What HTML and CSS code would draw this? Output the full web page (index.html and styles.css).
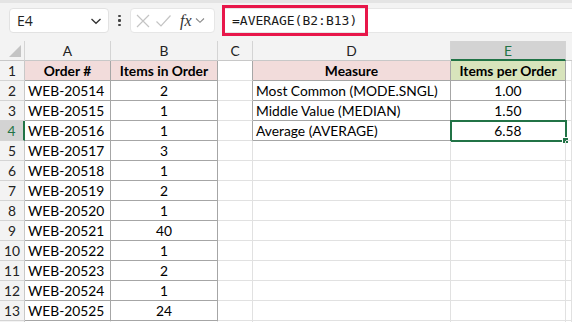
FILE: index.html
```html
<!DOCTYPE html>
<html>
<head>
<meta charset="utf-8">
<link rel="stylesheet" href="styles.css">
</head>
<body>
<div class="toolbar">
  <div class="namebox"><span class="nb-text">E4</span>
    <svg class="chev" width="12" height="8" viewBox="0 0 12 8"><path d="M1.5 2 L6 6.3 L10.5 2" fill="none" stroke="#333" stroke-width="1.3"/></svg>
  </div>
  <div class="dots"><i></i><i></i><i></i></div>
  <div class="fxbox">
    <svg width="16" height="16" viewBox="0 0 16 16"><path d="M2 2 L14 14 M14 2 L2 14" stroke="#c4c4c4" stroke-width="1.2"/></svg>
    <svg width="17" height="16" viewBox="0 0 17 16"><path d="M1.5 8.5 L6 13 L15.5 2.5" fill="none" stroke="#c4c4c4" stroke-width="1.2"/></svg>
    <span class="fx">fx</span>
    <svg class="chev2" width="10" height="7" viewBox="0 0 10 7"><path d="M1 1.5 L5 5.3 L9 1.5" fill="none" stroke="#888" stroke-width="1.1"/></svg>
  </div>
  <div class="formula">
    <span class="ftext">=AVERAGE(B2:B13)</span>
    <span class="highlight"></span>
  </div>
</div>
<div class="sheet">
  <div class="corner"><span class="tri"></span></div>
  <div class="ch">A</div><div class="ch">B</div><div class="ch">C</div><div class="ch">D</div><div class="ch sel">E</div><div class="ch last"></div>

  <div class="rh">1</div><div class="c hd dk">Order #</div><div class="c hd dk ctr">Items in Order</div><div class="c dkr"></div><div class="c hd dk ctr">Measure</div><div class="c hdg dk ctr">Items per Order</div><div class="c"></div>
  <div class="rh">2</div><div class="c dk">WEB-20514</div><div class="c dk ctr">2</div><div class="c dkr"></div><div class="c dk">Most Common (MODE.SNGL)</div><div class="c dk ctr">1.00</div><div class="c"></div>
  <div class="rh">3</div><div class="c dk">WEB-20515</div><div class="c dk ctr">1</div><div class="c dkr"></div><div class="c dk">Middle Value (MEDIAN)</div><div class="c dk ctr">1.50</div><div class="c"></div>
  <div class="rh selr">4</div><div class="c dk">WEB-20516</div><div class="c dk ctr">1</div><div class="c dkr"></div><div class="c dk">Average (AVERAGE)</div><div class="c dk ctr active">6.58<span class="handle"></span></div><div class="c"></div>
  <div class="rh">5</div><div class="c dk">WEB-20517</div><div class="c dk ctr">3</div><div class="c"></div><div class="c"></div><div class="c"></div><div class="c"></div>
  <div class="rh">6</div><div class="c dk">WEB-20518</div><div class="c dk ctr">1</div><div class="c"></div><div class="c"></div><div class="c"></div><div class="c"></div>
  <div class="rh">7</div><div class="c dk">WEB-20519</div><div class="c dk ctr">2</div><div class="c"></div><div class="c"></div><div class="c"></div><div class="c"></div>
  <div class="rh">8</div><div class="c dk">WEB-20520</div><div class="c dk ctr">1</div><div class="c"></div><div class="c"></div><div class="c"></div><div class="c"></div>
  <div class="rh">9</div><div class="c dk">WEB-20521</div><div class="c dk ctr">40</div><div class="c"></div><div class="c"></div><div class="c"></div><div class="c"></div>
  <div class="rh">10</div><div class="c dk">WEB-20522</div><div class="c dk ctr">1</div><div class="c"></div><div class="c"></div><div class="c"></div><div class="c"></div>
  <div class="rh">11</div><div class="c dk">WEB-20523</div><div class="c dk ctr">2</div><div class="c"></div><div class="c"></div><div class="c"></div><div class="c"></div>
  <div class="rh">12</div><div class="c dk">WEB-20524</div><div class="c dk ctr">1</div><div class="c"></div><div class="c"></div><div class="c"></div><div class="c"></div>
  <div class="rh">13</div><div class="c dk">WEB-20525</div><div class="c dk ctr">24</div><div class="c"></div><div class="c"></div><div class="c"></div><div class="c"></div>
  <div class="rh"></div><div class="c"></div><div class="c"></div><div class="c"></div><div class="c"></div><div class="c"></div><div class="c"></div>
</div>
</body>
</html>
```
FILE: styles.css
```css
* { box-sizing: border-box; }
html, body { margin: 0; padding: 0; }
body {
  width: 572px;
  height: 322px;
  overflow: hidden;
  background: #fff;
  font-family: Lato, "Open Sans", sans-serif;
  color: #000;
}
.toolbar {
  height: 41px;
  background: #f3f3f3;
  border-top: 3px solid #e4e4e4;
  display: flex;
  align-items: flex-start;
  padding-top: 5px;
  padding-left: 9px;
}
.namebox {
  width: 100px;
  height: 25px;
  background: #fff;
  border: 1px solid #e2e2e2;
  border-radius: 4px;
  display: flex;
  align-items: center;
  justify-content: space-between;
  padding: 0 6px 0 7px;
}
.nb-text { font-family: "Open Sans", sans-serif; font-size: 14px; color: #222; }
.dots {
  width: 21px;
  height: 25px;
  display: flex;
  flex-direction: column;
  align-items: center;
  justify-content: center;
  gap: 2px;
}
.dots i { display: block; width: 2.5px; height: 2.5px; background: #444; border-radius: 1px; }
.fxbox {
  width: 85px;
  height: 25px;
  background: #fff;
  border: 1px solid #e6e6e6;
  border-radius: 4px;
  display: flex;
  align-items: center;
  padding-left: 4px;
  gap: 4px;
}
.fx {
  font-family: "Liberation Serif", serif;
  font-style: italic;
  font-size: 16px;
  color: #333;
  margin-left: 4px;
}
.chev2 { margin-left: -1px; }
.formula {
  position: relative;
  flex: 1;
  height: 25px;
  margin-left: 7px;
  background: #fff;
  border: 1px solid #e6e6e6;
  border-right: none;
  display: flex;
  align-items: center;
  padding-left: 9px;
}
.ftext {
  font-family: "DejaVu Sans Mono", monospace;
  font-size: 13px;
  color: #1a1a1a;
}
.highlight {
  position: absolute;
  left: -1px;
  top: -4px;
  width: 146px;
  height: 31px;
  border: 3px solid #e8174a;
}
.sheet {
  display: grid;
  grid-template-columns: 25px 86px 107px 35px 198px 115px 6px;
  grid-template-rows: 20px repeat(13, 20px) 2px;
  font-size: 13.8px;
}
.corner {
  position: relative;
  background: #f3f3f3;
  border-right: 1px solid #d4d4d4;
  border-bottom: 1px solid #c8c8c8;
}
.tri {
  position: absolute;
  right: 3px;
  bottom: 3px;
  width: 0; height: 0;
  border-left: 12px solid transparent;
  border-bottom: 12px solid #c4c4c4;
}
.ch {
  background: #f3f3f3;
  border-right: 1px solid #d4d4d4;
  border-bottom: 1px solid #c8c8c8;
  display: flex;
  align-items: center;
  justify-content: center;
  color: #222;
  font-size: 13.8px;
}
.ch.sel {
  background: #d3d3d3;
  color: #217346;
  border-bottom: 2px solid #217346;
}
.ch.last { border-right: none; }
.rh {
  background: #f3f3f3;
  border-right: 1px solid #c8c8c8;
  border-bottom: 1px solid #d4d4d4;
  display: flex;
  align-items: center;
  justify-content: center;
  color: #222;
}
.rh.selr {
  background: #d3d3d3;
  color: #217346;
  border-right: 2px solid #217346;
}
.c {
  border-right: 1px solid #e1e1e1;
  border-bottom: 1px solid #e1e1e1;
  display: flex;
  align-items: center;
  padding-left: 3px;
  white-space: nowrap;
  position: relative;
}
.c.dk { border-right-color: #a6a6a6; border-bottom-color: #a6a6a6; }
.c.dkr { border-right-color: #a6a6a6; }
.c.ctr { justify-content: center; padding-left: 0; }
.c.hd { background: #f2dcdb; font-weight: bold; }
.c.hdg { background: #d8e4bc; font-weight: bold; }
.c.hd:not(.ctr) { justify-content: center; padding-left: 0; }
.active { outline: 2px solid #217346; outline-offset: -1px; }
.handle {
  position: absolute;
  right: -4px;
  bottom: -4px;
  width: 5px;
  height: 5px;
  background: #217346;
  border: 1px solid #fff;
  box-sizing: content-box;
}
```
